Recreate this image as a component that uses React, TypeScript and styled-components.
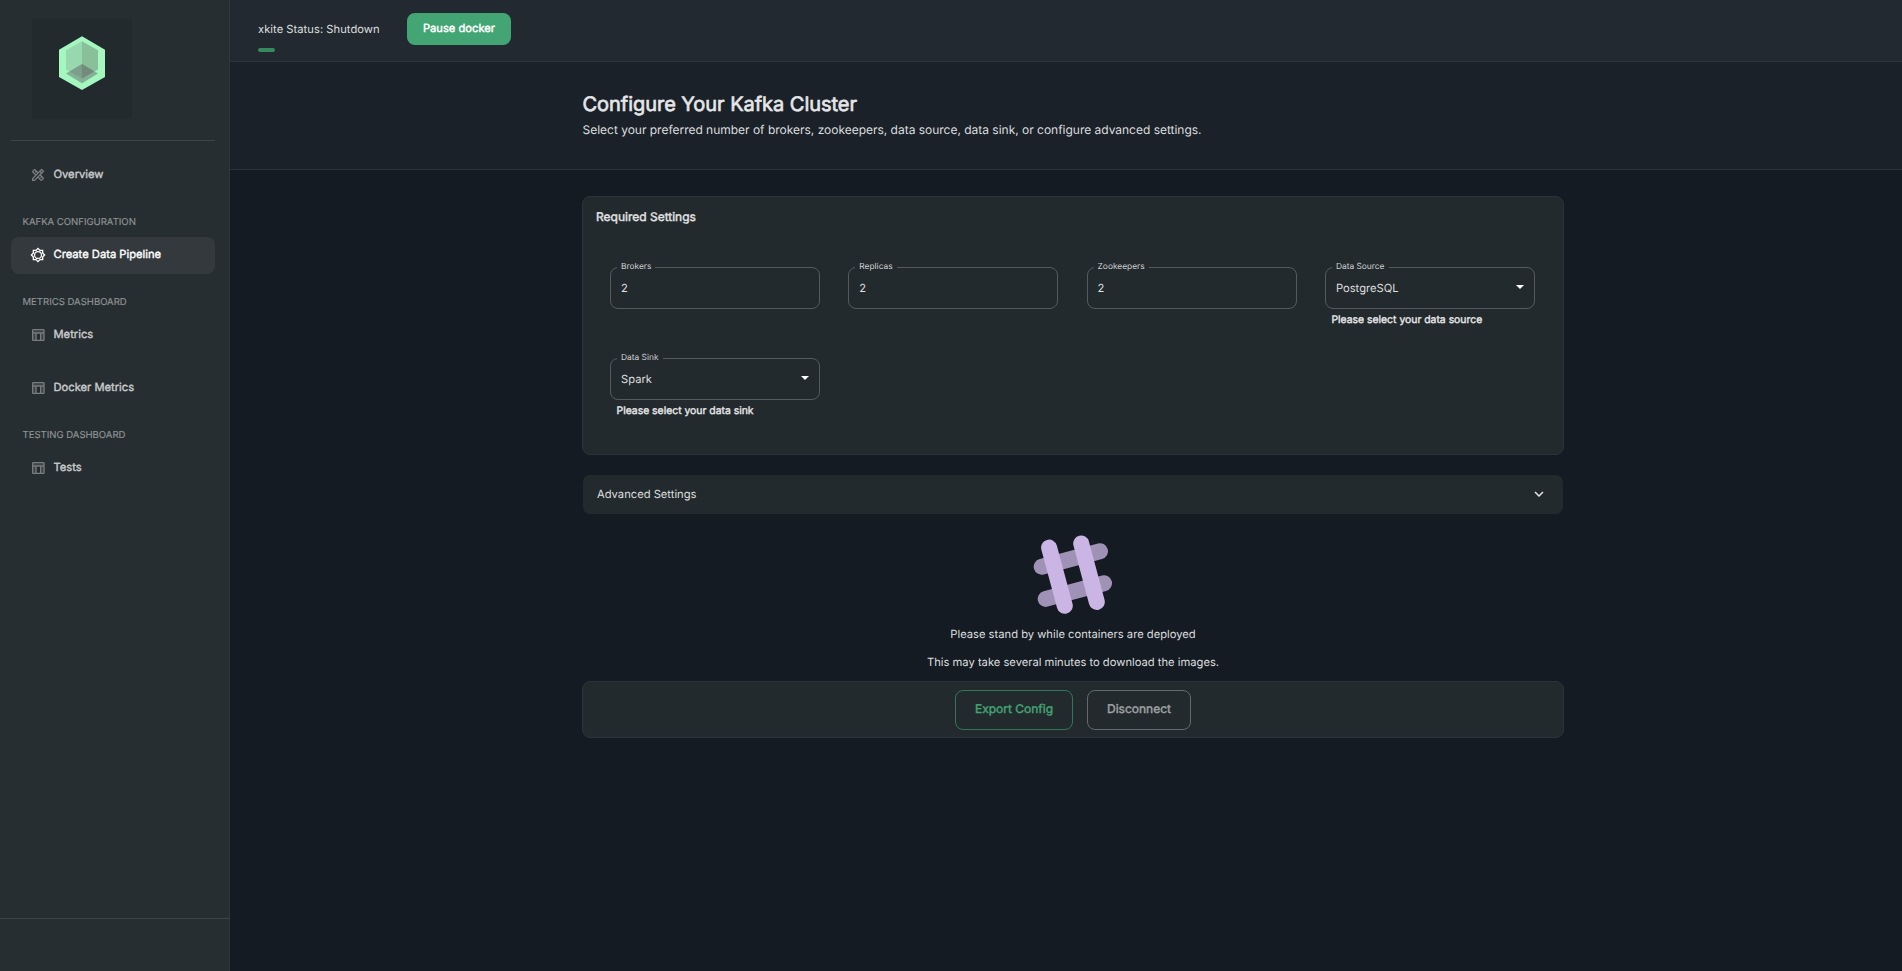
import React from 'react';
import styled, { createGlobalStyle, css } from 'styled-components';
import { MdOutlineDesignServices } from 'react-icons/md';

const colors = {
  page: '#141b22',
  sidebar: '#272e31',
  header: '#222930',
  title: '#1b2129',
  card: '#232a2d',
  line: '#2c343b',
  text: '#dcdedf',
  green: '#44a574',
};

const GlobalStyle = createGlobalStyle`
  *, *::before, *::after { box-sizing: border-box; }
  html, body { margin: 0; height: 100%; }
  body {
    background: ${colors.page};
    color: ${colors.text};
    font-family: Inter, 'Liberation Sans', sans-serif;
    font-size: 11.2px;
    text-rendering: geometricPrecision;
    overflow: hidden;
  }
  h1, h2, p { margin: 0; font-weight: 400; }
  button { font-family: inherit; text-rendering: inherit; }
`;

/* Regular glyphs thickened by a thin outline, keeping the regular widths. */
const heavy = css`
  font-weight: 400;
  -webkit-text-stroke: 0.42px currentColor;
`;

const Page = styled.div`
  display: flex;
  height: 100vh;
`;

const Sidebar = styled.aside`
  width: 230px;
  flex: none;
  display: flex;
  flex-direction: column;
  background: ${colors.sidebar};
  border-right: 1px solid #303940;
`;

const LogoBox = styled.div`
  width: 100px;
  height: 100px;
  margin: 19px 0 0 32px;
  background: #232a2d;

  svg { display: block; }
`;

const SidebarDivider = styled.hr<{ $inset?: boolean }>`
  width: ${(p) => (p.$inset ? '204px' : '100%')};
  height: 1px;
  border: 0;
  margin: ${(p) => (p.$inset ? '21px 0 16px 11px' : '0')};
  background: #3d4548;
`;

const Nav = styled.nav`
  flex: 1;
  display: flex;
  flex-direction: column;
  padding-left: 11px;
`;

const NavSection = styled.h2`
  height: 24px;
  margin-top: 19px;
  padding-left: 11.5px;
  line-height: 19px;
  font-size: 9.55px;
  color: #8f9496;
  -webkit-text-stroke: 0.15px currentColor;
`;

const NavItem = styled.a<{ $active?: boolean; $spaced?: boolean }>`
  display: flex;
  align-items: center;
  gap: 7.5px;
  width: 204px;
  height: 37px;
  margin-top: ${(p) => (p.$spaced ? '16px' : '0')};
  padding-left: 19px;
  border-radius: 8px;
  color: ${(p) => (p.$active ? '#ffffff' : '#c9cbcc')};
  background: ${(p) => (p.$active ? '#33393c' : 'transparent')};

  span {
    ${heavy}
    -webkit-text-stroke-width: 0.38px;
    line-height: 16px;
    margin-top: -3.5px;
  }
  svg {
    width: 16px;
    height: 16px;
    margin-top: -1px;
    color: ${(p) => (p.$active ? '#ffffff' : '#787d7f')};
  }
`;

const SidebarFooter = styled.div`
  height: 52px;
`;

const Main = styled.main`
  flex: 1;
  display: flex;
  flex-direction: column;
`;

const Header = styled.header`
  display: flex;
  height: 62px;
  padding-left: 28px;
  background: ${colors.header};
  border-bottom: 1px solid ${colors.line};
`;

const Status = styled.div`
  width: 149px;
  padding-top: 20px;
  line-height: 18px;
  letter-spacing: 0.03px;
`;

const StatusBar = styled.div`
  width: 17px;
  height: 4px;
  margin-top: 10px;
  border-radius: 2px;
  background: #37895f;
`;

const PauseButton = styled.button`
  ${heavy}
  width: 104px;
  height: 32px;
  margin-top: 13px;
  padding: 0 0 3px;
  border: 0;
  border-radius: 8px;
  background: ${colors.green};
  color: #ffffff;
  font-size: 11.2px;
`;

const TitleBand = styled.section`
  height: 108px;
  padding: 28.5px 0 0 352.5px;
  background: ${colors.title};
  border-bottom: 1px solid ${colors.line};
`;

const Title = styled.h1`
  ${heavy}
  -webkit-text-stroke-width: 0.65px;
  font-size: 20px;
  letter-spacing: -0.04px;
  line-height: 27px;
  color: #e6e7e8;
`;

const Subtitle = styled.p`
  font-size: 12px;
  letter-spacing: -0.015px;
  line-height: 21px;
  margin-top: 1px;
`;

const Content = styled.div`
  width: 982px;
  margin: 26px 0 0 352px;
  display: flex;
  flex-direction: column;
`;

const Card = styled.section`
  background: ${colors.card};
  border: 1px solid ${colors.line};
  border-radius: 8px;
`;

const SettingsCard = styled(Card)`
  height: 259px;
  padding: 11px 0 0 13px;
`;

const CardTitle = styled.h2`
  ${heavy}
  font-size: 12px;
  line-height: 17px;
  color: #e4e5e6;
`;

const FieldGrid = styled.div`
  display: grid;
  grid-template-columns: repeat(4, 210px);
  column-gap: 28.3px;
  row-gap: 31px;
  grid-auto-rows: 60px;
  margin: 42px 0 0 14px;
`;

const FieldBox = styled.div`
  position: relative;
  display: flex;
  align-items: center;
  justify-content: space-between;
  height: 42px;
  padding: 0 10px 0 10px;
  border: 1px solid #555b5d;
  border-radius: 8px;

  svg { margin-top: -2px; }
`;

const FieldLabel = styled.label`
  position: absolute;
  top: -7.5px;
  left: 6px;
  padding: 0 4px;
  background: ${colors.card};
  font-size: 8.4px;
  line-height: 12px;
  color: #cfd1d2;
`;

const Helper = styled.p`
  ${heavy}
  -webkit-text-stroke-width: 0.38px;
  font-size: 10.4px;
  line-height: 15px;
  padding: 3px 0 0 6.5px;
  color: #e6e7e8;
`;

const Accordion = styled.button`
  display: flex;
  align-items: center;
  justify-content: space-between;
  height: 39px;
  margin: 20px 1px 0;
  padding: 0 15px 1px 14px;
  border: 0;
  border-radius: 7px;
  background: ${colors.card};
  color: ${colors.text};
  font-size: 11.2px;
`;

const Progress = styled.div`
  display: flex;
  flex-direction: column;
  align-items: center;
  padding-top: 20px;
`;

const ProgressText = styled.p`
  height: 28px;
  line-height: 18px;
`;

const LoaderIcon = styled.svg`
  display: block;
  margin-bottom: 11px;
`;

const Actions = styled(Card)`
  display: flex;
  justify-content: center;
  gap: 14px;
  height: 57px;
  padding-top: 8px;
`;

const ActionButton = styled.button<{ $primary?: boolean }>`
  ${heavy}
  width: ${(p) => (p.$primary ? '118px' : '104px')};
  height: 40px;
  padding: 0 0 3px;
  background: transparent;
  border: 1px solid ${(p) => (p.$primary ? '#347656' : '#64696b')};
  border-radius: 8px;
  color: ${(p) => (p.$primary ? colors.green : '#a0a4a6')};
  font-size: 12px;
`;

const Logo = () => (
  <svg width="100" height="100" viewBox="32 19 100 100">
    <path d="M82 36.3 105 49.7V77L82 90 59 77V49.7z" fill="#a3f7bf" />
    <path d="M82 41.2V78.6L66 69.6V50.3z" fill="#97d8ae" />
    <path d="M82 41.2V78.6L98 69.6V50.3z" fill="#8abf9c" />
    <path d="M82 64 98 73.6 82 83.2 66 73.6z" fill="#5a4f5b" fillOpacity="0.42" />
    <path d="M82 64V78.6L93 72.4V70.6z" fill="#5a4f5b" fillOpacity="0.08" />
  </svg>
);

const GearIcon = () => (
  <svg viewBox="0 0 24 24" fill="currentColor">
    <path d="M20 8.69V4h-4.69L12 .69 8.69 4H4v4.69L.69 12 4 15.31V20h4.69L12 23.31 15.31 20H20v-4.69L23.31 12 20 8.69zm-2 5.79V18h-3.52L12 20.48 9.52 18H6v-3.52L3.52 12 6 9.52V6h3.52L12 3.52 14.48 6H18v3.52L20.48 12 18 14.48z" />
    <circle cx="12" cy="12" r="5.2" fill="none" stroke="currentColor" strokeWidth="1.8" />
  </svg>
);

const TableIcon = () => (
  <svg viewBox="0 0 24 24" fill="currentColor">
    <path opacity=".3" d="M5 10h3v9H5zM17 10h3v9h-3zM5 5h15v3H5z" />
    <path d="M20 3H5c-1.1 0-2 .9-2 2v14c0 1.1.9 2 2 2h15c1.1 0 2-.9 2-2V5c0-1.1-.9-2-2-2zm0 2v3H5V5h15zm-5 14h-5v-9h5v9zM5 10h3v9H5v-9zm12 9v-9h3v9h-3z" />
  </svg>
);

const Caret = () => (
  <svg width="8" height="4" viewBox="0 0 8 4">
    <path d="M0 0h8L4 4z" fill="#ffffff" />
  </svg>
);

const Chevron = () => (
  <svg width="18" height="18" viewBox="0 0 24 24" fill="#e6e7e8">
    <path d="M16.59 8.59 12 13.17 7.41 8.59 6 10l6 6 6-6z" />
  </svg>
);

const Loader = () => (
  <LoaderIcon width="80" height="80" viewBox="1033 534 80 80" strokeWidth="16" strokeLinecap="round">
    <g stroke="#a091b7">
      <path d="M1041.7 566.7 1100 551.2" />
      <path d="M1045.7 598.9 1104 583.2" />
    </g>
    <g stroke="#cbb5e4">
      <path d="M1049.1 547.6 1064.8 605.8" />
      <path d="M1081.2 543.5 1096.8 601.9" />
    </g>
  </LoaderIcon>
);

interface FieldProps {
  label: string;
  value: string;
  select?: boolean;
  helper?: string;
}

const Field = ({ label, value, select, helper }: FieldProps) => (
  <div>
    <FieldBox>
      <FieldLabel>{label}</FieldLabel>
      <span>{value}</span>
      {select && <Caret />}
    </FieldBox>
    {helper && <Helper>{helper}</Helper>}
  </div>
);

export default function App() {
  return (
    <Page>
      <GlobalStyle />
      <Sidebar>
        <LogoBox>
          <Logo />
        </LogoBox>
        <SidebarDivider $inset />
        <Nav>
          <NavItem>
            <MdOutlineDesignServices />
            <span>Overview</span>
          </NavItem>
          <NavSection>KAFKA CONFIGURATION</NavSection>
          <NavItem $active>
            <GearIcon />
            <span>Create Data Pipeline</span>
          </NavItem>
          <NavSection>METRICS DASHBOARD</NavSection>
          <NavItem>
            <TableIcon />
            <span>Metrics</span>
          </NavItem>
          <NavItem $spaced>
            <TableIcon />
            <span>Docker Metrics</span>
          </NavItem>
          <NavSection>TESTING DASHBOARD</NavSection>
          <NavItem>
            <TableIcon />
            <span>Tests</span>
          </NavItem>
        </Nav>
        <SidebarDivider />
        <SidebarFooter />
      </Sidebar>
      <Main>
        <Header>
          <Status>
            xkite Status: Shutdown
            <StatusBar />
          </Status>
          <PauseButton>Pause docker</PauseButton>
        </Header>
        <TitleBand>
          <Title>Configure Your Kafka Cluster</Title>
          <Subtitle>
            Select your preferred number of brokers, zookeepers, data source, data sink, or configure advanced
            settings.
          </Subtitle>
        </TitleBand>
        <Content>
          <SettingsCard>
            <CardTitle>Required Settings</CardTitle>
            <FieldGrid>
              <Field label="Brokers" value="2" />
              <Field label="Replicas" value="2" />
              <Field label="Zookeepers" value="2" />
              <Field label="Data Source" value="PostgreSQL" select helper="Please select your data source" />
              <Field label="Data Sink" value="Spark" select helper="Please select your data sink" />
            </FieldGrid>
          </SettingsCard>
          <Accordion>
            Advanced Settings
            <Chevron />
          </Accordion>
          <Progress>
            <Loader />
            <ProgressText>Please stand by while containers are deployed</ProgressText>
            <ProgressText>This may take several minutes to download the images.</ProgressText>
          </Progress>
          <Actions>
            <ActionButton $primary>Export Config</ActionButton>
            <ActionButton>Disconnect</ActionButton>
          </Actions>
        </Content>
      </Main>
    </Page>
  );
}
